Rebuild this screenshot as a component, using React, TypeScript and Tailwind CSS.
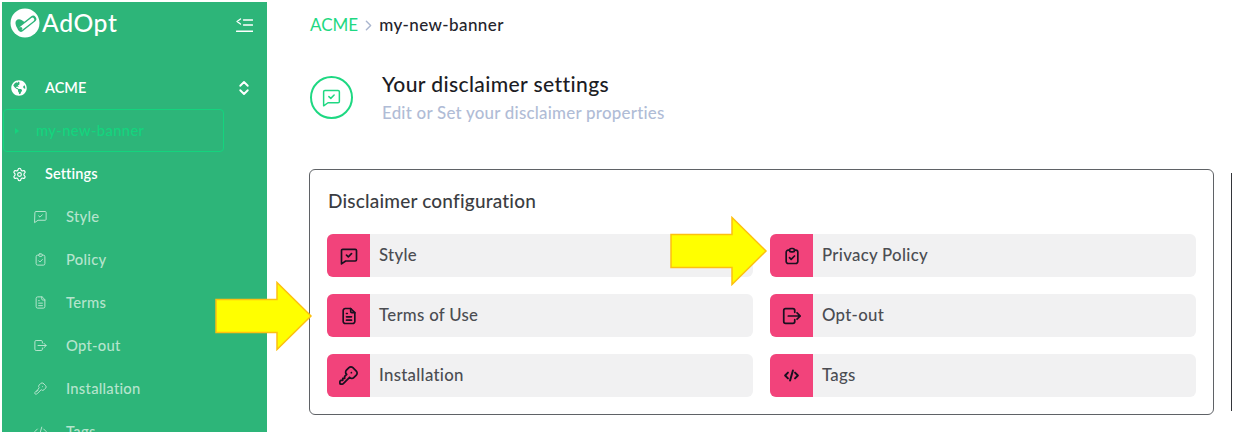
import React from "react";
import { ChevronsUpDown, Settings, ChevronRight } from "lucide-react";
import { FaGlobeAmericas } from "react-icons/fa";

type P = { className?: string };
const Svg = ({ className, sw = 2, children }: P & { sw?: number; children: React.ReactNode }) => (
  <svg viewBox="0 0 24 24" fill="none" stroke="currentColor" strokeWidth={sw} strokeLinecap="round" strokeLinejoin="round" className={className}>
    {children}
  </svg>
);
const MsgCheck = ({ className, sw }: P & { sw?: number }) => (
  <Svg className={className} sw={sw}>
    <path d="M3 5.5A1.5 1.5 0 0 1 4.5 4h15A1.5 1.5 0 0 1 21 5.5v11a1.5 1.5 0 0 1-1.5 1.5H8l-5 3.5z" />
    <path d="m9 11 2.2 2L15 9.2" />
  </Svg>
);
const ClipCheck = ({ className, sw }: P & { sw?: number }) => (
  <Svg className={className} sw={sw}>
    <path d="M9 5H7.5A2.5 2.5 0 0 0 5 7.5v11A2.5 2.5 0 0 0 7.5 21h9a2.5 2.5 0 0 0 2.5-2.5v-11A2.5 2.5 0 0 0 16.5 5H15" />
    <rect x="9" y="3" width="6" height="4" rx="2" />
    <path d="m9 14 2 2 4-4" />
  </Svg>
);
const FileLines = ({ className, sw }: P & { sw?: number }) => (
  <Svg className={className} sw={sw}>
    <path d="M14 3H7.5A2.5 2.5 0 0 0 5 5.500v13A2.5 2.5 0 0 0 7.500 21h9a2.500 2.500 0 0 0 2.500-2.500V8z" />
    <path d="M14 3v3.500A1.500 1.500 0 0 0 15.500 8H19" />
    <path d="M9 9h1M9 13h6M9 17h6" />
  </Svg>
);
const OptOut = ({ className, sw }: P & { sw?: number }) => (
  <Svg className={className} sw={sw}>
    <path d="M15 8V6a2 2 0 0 0-2-2H5a2 2 0 0 0-2 2v12a2 2 0 0 0 2 2h8a2 2 0 0 0 2-2v-2" />
    <path d="M8 12h13m-3.500-3.500L21 12l-3.500 3.500" />
  </Svg>
);
const Key = ({ className, sw }: P & { sw?: number }) => (
  <Svg className={className} sw={sw}>
    <path d="M16.555 3.843l3.602 3.602a2.877 2.877 0 0 1 0 4.069l-2.643 2.643a2.877 2.877 0 0 1-4.069 0l-.301-.301-6.558 6.558a2 2 0 0 1-1.239.578l-.175.008h-1.172a1 1 0 0 1-.993-.883l-.007-.117v-1.172a2 2 0 0 1 .467-1.284l.119-.13.414-.414h2v-2h2v-2l2.144-2.144-.301-.301a2.877 2.877 0 0 1 0-4.069l2.643-2.643a2.877 2.877 0 0 1 4.069 0z" />
    <path d="M15 9h.01" />
  </Svg>
);
const CodeTag = ({ className, sw }: P & { sw?: number }) => (
  <Svg className={className} sw={sw}>
    <path d="M7 8l-4 4 4 4M17 8l4 4-4 4M14 5l-4 14" />
  </Svg>
);

const Logo = () => (
  <svg viewBox="0 0 30 30" className="mt-px h-[30px] w-[30px] shrink-0">
    <circle cx="15" cy="15" r="14.500" fill="#fff" />
    <path d="M5.500 15.500c-.5-3.500 3-5.500 6-3.500l3 2-4 6-2 1.500c-1.500-1.500-2.700-3.500-3-6z" fill="#2db579" />
    <path d="M11 20.500 23 11" stroke="#2db579" strokeWidth="6.500" strokeLinecap="round" />
    <path d="M11.500 20 22.500 11.500" stroke="#fff" strokeWidth="3.600" strokeLinecap="round" />
    <circle cx="10.800" cy="20.500" r="1.500" fill="#2db579" />
  </svg>
);

const Collapse = () => (
  <svg viewBox="0 0 17 15" fill="none" stroke="#fff" strokeWidth="1.300" strokeLinecap="round" strokeLinejoin="round" className="h-[15px] w-[17px]">
    <path d="M4.500 1 1 3.500 4.500 6" />
    <path d="M7.500 2h9M7.500 7h9" />
    <path d="M.7 13.300h15.800" strokeWidth="1.600" />
  </svg>
);

const Arrow = ({ className }: P) => (
  <svg viewBox="0 0 98 70" className={className}>
    <path d="M1 18.500h61V1.500L96 35 62 68.500V51.500H1z" fill="#ffff00" stroke="#fdc010" strokeWidth="1.500" />
  </svg>
);

const subs = [
  { l: "Style", I: MsgCheck },
  { l: "Policy", I: ClipCheck },
  { l: "Terms", I: FileLines },
  { l: "Opt-out", I: OptOut },
  { l: "Installation", I: Key },
  { l: "Tags", I: CodeTag },
];

const cards = [
  { l: "Style", I: MsgCheck, s: "h-[20px] w-[20px]", w: 2 },
  { l: "Privacy Policy", I: ClipCheck, s: "h-[20px] w-[20px]", w: 2 },
  { l: "Terms of Use", I: FileLines, s: "h-[20px] w-[20px]", w: 2 },
  { l: "Opt-out", I: OptOut, s: "h-[22px] w-[22px]", w: 1.9 },
  { l: "Installation", I: Key, s: "h-[23px] w-[23px]", w: 1.8 },
  { l: "Tags", I: CodeTag, s: "h-[17px] w-[17px]", w: 2.8 },
];

export default function App() {
  return (
    <div className="relative flex h-[432px] w-[1248px] overflow-hidden bg-white pl-[2px] pt-[2px] [font-family:Lato,'Noto_Sans',sans-serif]">
      <aside className="flex h-[430px] w-[265px] shrink-0 flex-col overflow-hidden bg-[#2db579]">
        <div className="flex h-[64px] shrink-0 items-start justify-between pl-[8px] pr-[12px] pt-[5px]">
          <div className="flex items-center gap-[2px]">
            <Logo />
            <span className="text-[24.700px] font-medium leading-[30px] tracking-[0.6px] text-white">AdOpt</span>
          </div>
          <div className="pr-[2px] pt-[11px]"><Collapse /></div>
        </div>
        <div className="flex h-[43px] shrink-0 items-center pl-[9px] pr-[14px] pt-px text-[14.500px] font-semibold text-white">
          <FaGlobeAmericas className="h-[16px] w-[16px]" />
          <span className="ml-[18px] flex-1">ACME</span>
          <ChevronsUpDown className="h-[18px] w-[18px]" strokeWidth={2.5} />
        </div>
        <div className="ml-px flex h-[43px] w-[221px] shrink-0 items-center rounded-[4px] border border-[#14d47e] pl-[11px] text-[14.700px] font-medium tracking-[0.4px] text-[#14d47e]">
          <span className="h-0 w-0 border-y-[3px] border-l-[4px] border-y-transparent border-l-[#14d47e]" />
          <span className="ml-[17px]">my-new-banner</span>
        </div>
        <div className="flex h-[43px] shrink-0 items-center pl-[10px] pt-px text-[14.500px] font-semibold tracking-[0.1px] text-white">
          <Settings className="h-[15px] w-[15px]" strokeWidth={1.8} />
          <span className="ml-[18px]">Settings</span>
        </div>
        {subs.map(({ l, I }) => (
          <div key={l} className="flex h-[43px] shrink-0 items-center pl-[31px] text-[14.800px] font-medium tracking-[0.25px] text-[#b5e4cd]">
            <I className="h-[15px] w-[15px]" sw={1.6} />
            <span className="ml-[18px]">{l}</span>
          </div>
        ))}
      </aside>

      <main className="flex-1 pl-[43px] pt-[13px]">
        <div className="flex h-[20px] items-center">
          <span className="text-[17px] text-[#1ed882]">ACME</span>
          <ChevronRight className="mx-[2px] h-[17px] w-[17px] text-[#aab6cf]" strokeWidth={2} />
          <span className="text-[17px] font-medium tracking-[0.4px] text-[#24242c]">my-new-banner</span>
        </div>
        <div className="mt-[35px] flex items-center">
          <div className="flex h-[43px] w-[43px] items-center justify-center rounded-full border-2 border-[#1ed882] text-[#1ed882]">
            <MsgCheck className="h-[21px] w-[21px]" sw={1.700} />
          </div>
          <div className="ml-[29px]">
            <div className="text-[21.100px] font-medium leading-[28px] tracking-[0.37px] text-[#1c1c24]">Your disclaimer settings</div>
            <div className="mt-[4px] text-[16.900px] font-medium leading-[22px] tracking-[0.24px] text-[#b0bcd6]">Edit or Set your disclaimer properties</div>
          </div>
        </div>
        <div className="-ml-px mt-[45px] flex items-center gap-[17px]">
          <section className="h-[246px] w-[905px] shrink-0 rounded-[6px] border border-[#5f6266] px-[17px] pt-[18px]">
            <h2 className="pl-px text-[19px] font-medium leading-[25px] tracking-[0.2px] text-[#3b3d42]">Disclaimer configuration</h2>
            <div className="mt-[21px] grid grid-cols-2 gap-x-[17px] gap-y-[17px]">
              {cards.map(({ l, I, s, w }) => (
                <div key={l} className="flex h-[43px] items-center overflow-hidden rounded-[6px] bg-[#f1f1f2]">
                  <div className="flex h-full w-[43px] shrink-0 items-center justify-center bg-[#f2437b] text-[#1a1020]">
                    <I className={s} sw={w} />
                  </div>
                  <span className="mb-[2px] ml-[9px] text-[16.800px] font-medium tracking-[0.3px] text-[#4b4d52]">{l}</span>
                </div>
              ))}
            </div>
          </section>
          <div className="h-[238px] w-px shrink-0 bg-[#33353a]" />
        </div>
      </main>

      <Arrow className="absolute left-[670px] top-[216px] h-[70px] w-[98px]" />
      <Arrow className="absolute left-[215px] top-[281px] h-[70px] w-[98px]" />
    </div>
  );
}
